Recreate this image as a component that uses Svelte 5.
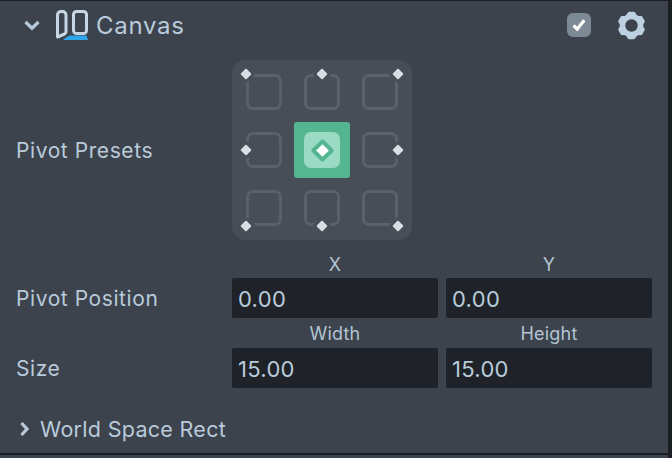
<script>
  const slots = [
    {}, {}, {},
    {}, { active: true }, {},
    {}, {}, {}
  ];
  const dotPos = [
    [246, 74], [322, 74], [398, 74],
    [246, 150], null, [398, 150],
    [246, 226], [322, 226], [398, 226]
  ];
  const gearPoints = [];
  for (let i = 0; i < 6; i++) {
    const a = i * 60 - 90;
    for (const [offset, radius] of [[-24, 8.3], [-11, 10], [11, 10], [24, 8.3]]) {
      const t = ((a + offset) * Math.PI) / 180;
      gearPoints.push(`${(12 + radius * Math.cos(t)).toFixed(2)},${(12 + radius * Math.sin(t)).toFixed(2)}`);
    }
  }
</script>

<div class="panel">
  <header class="head">
    <svg class="chev" width="18" height="12" viewBox="0 0 18 12"><path d="M2.500 3 9 9.200 15.500 3" fill="none" stroke="#b9cbdb" stroke-width="3.200"/></svg>
    <svg class="logo" width="34" height="34" viewBox="0 0 34 34">
      <path d="M2.500 6c0-2 1.500-3.500 3.500-3.500h1.500c2 0 3.500 1.500 3.500 3.500v16.500c0 1-.5 2-1.500 2.500L2.500 28z" fill="none" stroke="#c6d6e3" stroke-width="3" stroke-linejoin="round"/>
      <rect x="18.500" y="2.500" width="13" height="22" rx="3" fill="none" stroke="#c6d6e3" stroke-width="3"/>
      <path d="M8 31c2-1.500 4-3.500 7-4.500h16.500l1.500 4.500z" fill="#2fa6ea"/>
    </svg>
    <span class="title">Canvas</span>
    <span class="spacer"></span>
    <span class="check"><svg width="24" height="24" viewBox="0 0 24 24"><path d="M6.500 12.500l3.700 3.700 7-9" fill="none" stroke="#fff" stroke-width="3.200"/></svg></span>
    <svg class="gear" width="31" height="31" viewBox="0 0 24 24">
      <polygon points={gearPoints.join(' ')} fill="#bcd0e0" stroke="#bcd0e0" stroke-width="1.700" stroke-linejoin="round"/>
      <circle cx="12" cy="12" r="4.800" fill="#3c434d"/>
    </svg>
  </header>

  <div class="row presets-row">
    <span class="label">Pivot Presets</span>
    <div class="presets">
      {#each slots as s}
        <div class="cell">
          {#if s.active}
            <div class="on"><div class="on-inner"><span class="on-dia"></span></div></div>
          {:else}
            <div class="frame"></div>
          {/if}
        </div>
      {/each}
      {#each dotPos as d}
        {#if d}<span class="dot" style="left:{d[0] - 232}px;top:{d[1] - 60}px"></span>{/if}
      {/each}
    </div>
  </div>

  <div class="captions c1"><span>X</span><span>Y</span></div>
  <div class="row field-row">
    <span class="label">Pivot Position</span>
    <div class="inputs"><div class="input">0.00</div><div class="input">0.00</div></div>
  </div>
  <div class="captions c2"><span>Width</span><span>Height</span></div>
  <div class="row field-row">
    <span class="label">Size</span>
    <div class="inputs"><div class="input">15.00</div><div class="input">15.00</div></div>
  </div>

  <div class="world">
    <svg width="12" height="16" viewBox="0 0 12 16"><path d="M2.500 2l5.500 6-5.500 6" fill="none" stroke="#b9cbdb" stroke-width="3.200"/></svg>
    <span>World Space Rect</span>
  </div>
  <div class="rule"></div>
</div>

<style>
  :global(body) { margin: 0; background: #1b1e22; }
  .panel {
    width: 668px; height: 457px; margin-top: 1px; box-sizing: border-box;
    background: #3c434d; color: #b9cbdb;
    font-family: Inter, "Noto Sans", sans-serif; font-size: 22px;
    overflow: hidden;
  }
  .head { height: 48px; display: flex; align-items: center; padding-left: 23px; padding-right: 21px; }
  .chev { margin-right: 14px; }
  .logo { margin-right: 7px; margin-top: 1px; }
  .title { font-size: 24px; letter-spacing: .7px; }
  .spacer { flex: 1; }
  .check { width: 24px; height: 24px; border-radius: 6px; background: #7d8995; margin-right: 25px; display: block; margin-top: -1px; }
  .check svg { display: block; }
  .row { display: flex; padding-left: 16px; }
  .label { width: 216px; flex: none; font-size: 21px; letter-spacing: .58px; }
  .presets-row { align-items: center; height: 180px; margin-top: 11px; }
  .presets {
    position: relative; width: 180px; height: 180px; border-radius: 14px; background: #474e58;
    box-sizing: border-box; padding: 14px;
    display: grid; grid-template-columns: repeat(3, 36px); grid-template-rows: repeat(3, 36px);
    justify-content: space-between; align-content: space-between;
  }
  .cell { display: flex; align-items: center; justify-content: center; }
  .frame { width: 36px; height: 36px; box-sizing: border-box; border: 3px solid #5a616b; border-radius: 7px; flex: none; }
  .on { width: 56px; height: 56px; flex: none; border-radius: 3px; background: #53b690; display: flex; align-items: center; justify-content: center; }
  .on-inner { width: 36px; height: 36px; border-radius: 7px; background: #9bdbc6; display: flex; align-items: center; justify-content: center; }
  .on-dia { width: 17px; height: 17px; box-sizing: border-box; background: #fff; transform: rotate(45deg); border: 4px solid #53b690; border-radius: 2px; }
  .dot {
    position: absolute; width: 8px; height: 8px; margin: -4px 0 0 -4px; background: #d9dee5; border-radius: 1px;
    transform: rotate(45deg); box-shadow: 0 0 0 3px #474e58;
  }
  .captions { display: grid; grid-template-columns: 206px 206px; column-gap: 8px; padding-left: 232px; font-size: 18px; text-align: center; line-height: 22px; color: #b4c4d3; letter-spacing: .2px; }
  .c1 { margin-top: 14px; height: 24px; }
  .c2 { margin-top: 5px; height: 25px; }
  .field-row { align-items: center; }
  .inputs { display: flex; gap: 8px; }
  .input { width: 206px; height: 40px; box-sizing: border-box; background: #1f2329; border-radius: 2px; padding-left: 6px; line-height: 42px; font-size: 22px; letter-spacing: .3px; }
  .world { display: flex; align-items: center; gap: 9px; margin-top: 23px; padding-left: 19px; font-size: 21.500px; letter-spacing: .3px; height: 36px; }
  .rule { height: 2px; margin-top: 6px; background: #1b1e22; }
</style>
